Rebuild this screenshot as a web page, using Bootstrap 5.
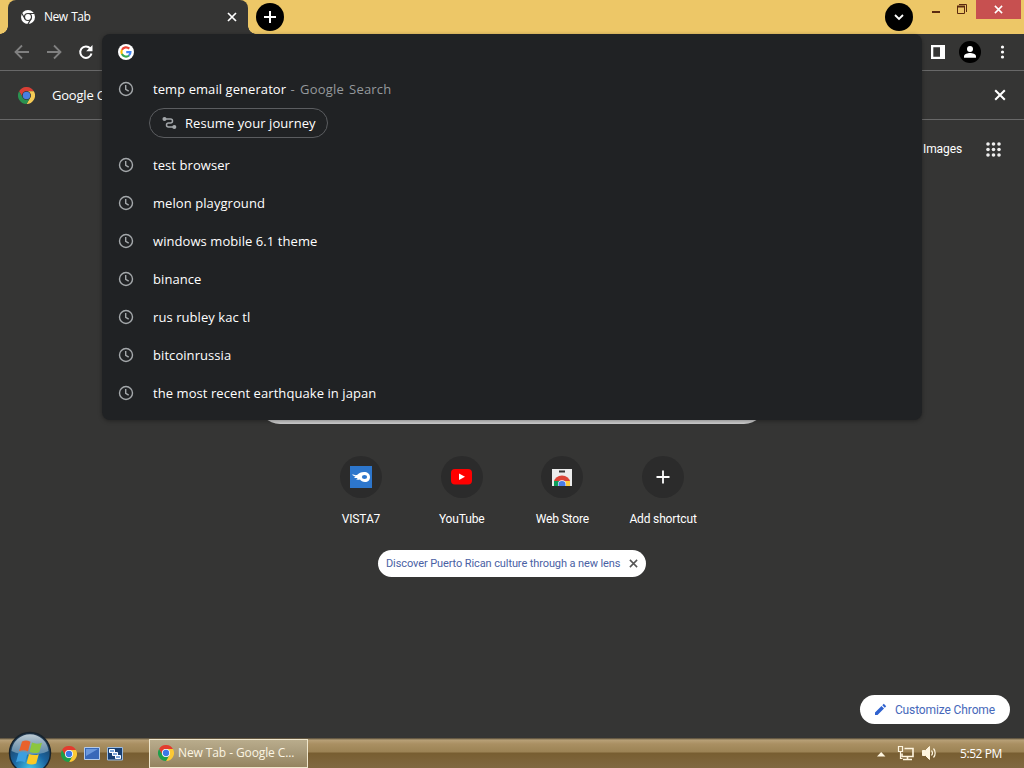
<!DOCTYPE html>
<html lang="en">
<head>
    <meta charset="UTF-8">
    <meta name="viewport" content="width=device-width, initial-scale=1.0">
    <title>New Tab</title>
    <link href="https://cdn.jsdelivr.net/npm/bootstrap@5.3.0/dist/css/bootstrap.min.css" rel="stylesheet">
    <style>
        body { font-family: "Open Sans", "Noto Sans", sans-serif; font-size: 13px; background: #353534; color: #fff; height: 768px; }
        svg { display: block; flex-shrink: 0; }
        .roboto { font-family: Roboto, "Liberation Sans", sans-serif; }

        .title-bar { height: 34px; background: #edc767; }
        .tab-foot { width: 8px; height: 34px; background: radial-gradient(circle 8px at 0 0, #edc767 7.5px, #353534 8px) 0 26px / 8px 8px no-repeat; }
        .tab-foot.flip { transform: scaleX(-1); }
        .browser-tab { width: 240px; height: 34px; background: #353534; border-radius: 8px 8px 0 0; padding: 0 11px 0 13px; }
        .browser-tab span { font-size: 12px; margin-left: 9px; letter-spacing: -.5px; word-spacing: 1px; }
        .round-btn { width: 28px; height: 28px; background: #000; margin-top: 3px; }
        .win-controls { height: 19px; margin-left: 18px; }
        .win-close { width: 45px; height: 19px; background: #c75050; margin: 0 3px 0 9px; }

        .tool-bar { height: 37px; border-bottom: 1px solid #686868; padding: 0 12px 0 14px; }
        .tool-icons { gap: 14px; }
        .info-bar { height: 49px; border-bottom: 1px solid #686868; padding: 0 18px; }
        .info-bar span { letter-spacing: -.2px; margin-left: 17px; padding-top: 2px; }

        .suggest-box { left: 102px; top: 34px; width: 820px; height: 386px; background: #202224; border-radius: 8px; box-shadow: 0 1px 4px rgba(0, 0, 0, .35); z-index: 10; letter-spacing: .07px; }
        .suggest-head { height: 36px; padding-left: 16px; }
        .suggest-row { height: 38px; padding-left: 16px; gap: 19px; }
        .suggest-row span, .journey span { padding-top: 2px; }
        .suggest-row small { font-size: inherit; color: #95999c; letter-spacing: .2px; word-spacing: 1.5px; margin-left: 1px; }
        .journey { width: 179px; height: 30px; margin: 0 0 8px 47px; border: 1px solid #5b5d60; padding-left: 12px; gap: 8px; }

        .new-tab-page { height: 618px; }
        .top-links { height: 57px; padding-right: 23px; gap: 23px; font-size: 12px; letter-spacing: -.1px; }
        .search-box { width: 508px; height: 44px; background: #ccc; margin-top: 203px; }
        .shortcut { width: 100.7px; font-size: 12px; letter-spacing: -.15px; }
        .tile-circle { width: 42px; height: 42px; background: #2b2b2b; }
        .shortcut span { margin-top: 12px; line-height: 18px; }
        .promo { width: 268px; height: 27px; background: #fff; color: #4a61a4; font-size: 11px; letter-spacing: -.1px; margin-top: 22px; padding: 0 8px; }
        .promo span { padding-top: 1px; }
        .customize { width: 150px; height: 29px; background: #fff; color: #4668ba; font-size: 12px; margin: 0 14px 14px 0; padding: 0 15px 0 14px; letter-spacing: -.12px; }

        .task-bar { height: 30px; background: linear-gradient(#4a4232 0, #b7a077 2px, #a98f62 6px, #9c8355 14px, #785e31 15px, #806840 29px); padding-right: 22px; font-size: 12px; }
        .start-orb { left: 8px; bottom: -7px; z-index: 5; }
        .quick-launch { margin-left: 61px; gap: 7px; padding-top: 1px; }
        .task-item { width: 159px; height: 29px; margin-left: 26px; padding-left: 8px; gap: 4px; background: linear-gradient(#b9ac8c, #a99b7b 45%, #94835f); border: 1px solid #efe6cc; color: #fbf4e2; letter-spacing: -.1px; }
        .clock-text { letter-spacing: -.4px; padding-top: 1px; margin-left: 21px; }
    </style>
</head>
<body class="position-relative overflow-hidden d-flex flex-column">
    <!-- shared icons -->
    <svg width="0" height="0" class="position-absolute">
        <symbol id="chrome" viewBox="0 0 48 48">
            <path fill="#e33b2e" d="M3.2 12A24 24 0 0 1 44.8 12H24A12 12 0 0 0 13.6 30z"/>
            <path fill="#fcc934" d="M44.8 12A24 24 0 0 1 24 48L34.4 30A12 12 0 0 0 24 12z"/>
            <path fill="#1e9e4a" d="M24 48A24 24 0 0 1 3.2 12L13.6 30A12 12 0 0 0 34.4 30z"/>
            <circle cx="24" cy="24" r="12" fill="#fff"/>
            <circle cx="24" cy="24" r="9.5" fill="#3b78e7"/>
        </symbol>
        <symbol id="chrome-flat" viewBox="0 0 48 48">
            <path fill="#d93f35" d="M3.2 12A24 24 0 0 1 44.8 12H24A12 12 0 0 0 13.6 30z"/>
            <path fill="#f5cb55" d="M44.8 12A24 24 0 0 1 24 48L34.4 30A12 12 0 0 0 24 12z"/>
            <path fill="#2a9150" d="M24 48A24 24 0 0 1 3.2 12L13.6 30A12 12 0 0 0 34.4 30z"/>
            <circle cx="24" cy="24" r="12" fill="#353534"/>
            <circle cx="24" cy="24" r="10.5" fill="#4a7fe0"/>
        </symbol>
        <symbol id="clock" viewBox="0 0 16 16">
            <g fill="none" stroke="#a4a8ab" stroke-width="1.4"><circle cx="8" cy="8" r="6.5"/><path d="M7.7 4v4.3l3 1.9"/></g>
        </symbol>
        <symbol id="cross" viewBox="0 0 10 10">
            <path d="M1 1l8 8M9 1l-8 8" stroke="currentColor" stroke-width="1.7" fill="none"/>
        </symbol>
    </svg>

    <div class="title-bar d-flex">
        <div class="tab-foot"></div>
        <div class="browser-tab d-flex align-items-center">
            <svg width="14" height="14" viewBox="0 0 48 48">
                <circle cx="24" cy="24" r="24" fill="#fff"/>
                <g fill="none" stroke="#353534" stroke-width="4"><circle cx="24" cy="24" r="12"/><path d="M24 12h22M13.6 30L2.6 11M34.4 30L23.5 49"/></g>
            </svg>
            <span>New Tab</span>
            <svg class="ms-auto" width="10" height="10"><use href="#cross"/></svg>
        </div>
        <div class="tab-foot flip"></div>
        <div class="round-btn rounded-circle d-flex align-items-center justify-content-center">
            <svg width="12" height="12"><path d="M6 0v12M0 6h12" stroke="#fff" stroke-width="2"/></svg>
        </div>
        <div class="round-btn rounded-circle d-flex align-items-center justify-content-center ms-auto">
            <svg width="10" height="7" viewBox="0 0 10 7"><path d="M1 1l4 4 4-4" stroke="#fff" stroke-width="1.8" fill="none"/></svg>
        </div>
        <div class="win-controls d-flex align-items-center">
            <svg width="36" height="19"><path d="M1 12h8" stroke="#5b2a10" stroke-width="2"/><path d="M26.5 6.5h7v7h-7zM28 4.5h7.5V12" stroke="#5b2a10" fill="none"/><path d="M26 6.5h8" stroke="#5b2a10" stroke-width="2"/></svg>
            <div class="win-close d-flex align-items-center justify-content-center">
                <svg width="9" height="9"><use href="#cross"/></svg>
            </div>
        </div>
    </div>

    <div class="tool-bar d-flex align-items-center">
        <svg width="82" height="36" fill="none" stroke-width="1.8">
            <path stroke="#808080" d="M15 18H2M8 11.5L1.5 18L8 24.5M33 18h13M40 11.5L46.5 18L40 24.5"/>
            <path stroke="#fff" stroke-width="2" d="M76.3 14.5A5.7 5.7 0 1 0 77.5 19.5"/><path fill="#fff" d="M78.5 11v6.3h-6.3z"/>
        </svg>
        <div class="tool-icons d-flex align-items-center ms-auto">
            <svg width="14" height="14"><path fill="#fff" fill-rule="evenodd" d="M0 0h14v14H0zM2.3 2.3v9.4H9V2.3z"/></svg>
            <svg width="22" height="22" viewBox="0 0 22 22"><circle cx="11" cy="11" r="11"/><circle cx="11" cy="8" r="3" fill="#fff"/><path fill="#fff" d="M5 16.8v-1.5c0-2.4 3.8-3.3 6-3.3s6 .9 6 3.3v1.5z"/></svg>
            <svg width="17" height="22" fill="#fff"><circle cx="7.5" cy="6" r="1.6"/><circle cx="7.5" cy="11" r="1.6"/><circle cx="7.5" cy="16" r="1.6"/></svg>
        </div>
    </div>

    <div class="info-bar d-flex align-items-center">
        <svg width="17" height="17"><use href="#chrome-flat"/></svg>
        <span>Google Chrome</span>
        <svg class="ms-auto" width="12" height="12"><use href="#cross"/></svg>
    </div>

    <div class="suggest-box position-absolute">
        <div class="suggest-head d-flex align-items-center">
            <svg width="16" height="16" viewBox="0 0 34 34" fill="none" stroke-width="4.5">
                <circle cx="17" cy="17" r="17" fill="#fff"/>
                <path stroke="#ea4335" d="M8.3 12.5A10 10 0 0 1 24 9.8"/><path stroke="#fbbc05" d="M8.3 21.5A10 10 0 0 1 8.3 12.5"/>
                <path stroke="#34a853" d="M23.5 24.5A10 10 0 0 1 8.3 21.5"/><path stroke="#4285f4" d="M17.5 17.2H26.5A10 10 0 0 1 23.3 24.6"/>
            </svg>
        </div>
        <div class="suggest-row d-flex align-items-center"><svg width="16" height="16"><use href="#clock"/></svg><span>temp email generator <small>- Google Search</small></span></div>
        <div class="journey rounded-pill d-flex align-items-center">
            <svg width="15" height="14" viewBox="0 0 15 14" fill="none" stroke="#a4a8ab" stroke-width="1.5"><path d="M3 3h5.5a2 2 0 0 1 0 4H6.5a2 2 0 0 0 0 4H12"/><circle cx="2.5" cy="3" r="1.3" fill="#a4a8ab"/><circle cx="12.3" cy="11" r="1.3" fill="#a4a8ab"/></svg>
            <span>Resume your journey</span>
        </div>
        <div class="suggest-row d-flex align-items-center"><svg width="16" height="16"><use href="#clock"/></svg><span>test browser</span></div>
        <div class="suggest-row d-flex align-items-center"><svg width="16" height="16"><use href="#clock"/></svg><span>melon playground</span></div>
        <div class="suggest-row d-flex align-items-center"><svg width="16" height="16"><use href="#clock"/></svg><span>windows mobile 6.1 theme</span></div>
        <div class="suggest-row d-flex align-items-center"><svg width="16" height="16"><use href="#clock"/></svg><span>binance</span></div>
        <div class="suggest-row d-flex align-items-center"><svg width="16" height="16"><use href="#clock"/></svg><span>rus rubley kac tl</span></div>
        <div class="suggest-row d-flex align-items-center"><svg width="16" height="16"><use href="#clock"/></svg><span>bitcoinrussia</span></div>
        <div class="suggest-row d-flex align-items-center"><svg width="16" height="16"><use href="#clock"/></svg><span>the most recent earthquake in japan</span></div>
    </div>

    <div class="new-tab-page roboto d-flex flex-column align-items-center">
        <div class="top-links align-self-end d-flex align-items-center">
            <span>Images</span>
            <svg width="16" height="16" fill="#eee"><circle cx="3" cy="3" r="1.8"/><circle cx="8.5" cy="3" r="1.8"/><circle cx="14" cy="3" r="1.8"/><circle cx="3" cy="8.5" r="1.8"/><circle cx="8.5" cy="8.5" r="1.8"/><circle cx="14" cy="8.5" r="1.8"/><circle cx="3" cy="14" r="1.8"/><circle cx="8.5" cy="14" r="1.8"/><circle cx="14" cy="14" r="1.8"/></svg>
        </div>
        <div class="search-box rounded-pill"></div>
        <div class="d-flex mt-4 pt-2">
            <div class="shortcut d-flex flex-column align-items-center">
                <div class="tile-circle rounded-circle d-flex align-items-center justify-content-center">
                    <svg width="22" height="22"><path fill="#2d76cc" d="M0 0h22v22H0z"/><path fill="#fff" d="M2 8.5c2 0 3 1 5 .5C9 7 11 6 14 6c3.5 0 6 2 6 5s-2 5-5 5c-2.500 0-4-1-5-2.500-2 .5-3 .3-4-.2 1-.3 1.500-.8 1.500-1.300H4l1.500-1.500C4 10.300 3 9.500 2 8.500z"/><ellipse cx="14.500" cy="11" rx="2.600" ry="2" fill="#2d76cc"/></svg>
                </div>
                <span>VISTA7</span>
            </div>
            <div class="shortcut d-flex flex-column align-items-center">
                <div class="tile-circle rounded-circle d-flex align-items-center justify-content-center">
                    <svg width="21" height="16"><rect width="21" height="15.5" rx="4" fill="#f00"/><path fill="#fff" d="M8 4.5l6 3.3-6 3.3z"/></svg>
                </div>
                <span>YouTube</span>
            </div>
            <div class="shortcut d-flex flex-column align-items-center">
                <div class="tile-circle rounded-circle d-flex align-items-center justify-content-center">
                    <svg width="20" height="17"><path fill="#ececec" d="M0 0h20v17H0z"/><path fill="#333" d="M7 1.5h6v2H7z"/><path fill="#db4437" d="M2 13a8 6.500 0 0 1 16 0z"/><path fill="#0f9d58" d="M2 12h5v5H2z"/><path fill="#ffcd40" d="M13 12h5v5h-5z"/><path fill="#fff" d="M6 17v-2a4 3.800 0 0 1 8 0v2z"/><path fill="#4a7de8" d="M6.500 17v-2a3.500 3 0 0 1 7 0v2z"/></svg>
                </div>
                <span>Web Store</span>
            </div>
            <div class="shortcut d-flex flex-column align-items-center">
                <div class="tile-circle rounded-circle d-flex align-items-center justify-content-center">
                    <svg width="14" height="14"><path d="M7 .5v13M.5 7h13" stroke="#fff" stroke-width="1.8"/></svg>
                </div>
                <span>Add shortcut</span>
            </div>
        </div>
        <div class="promo rounded-pill d-flex align-items-center justify-content-between">
            <span class="text-nowrap">Discover Puerto Rican culture through a new lens</span>
            <svg width="9" height="9" color="#555"><use href="#cross"/></svg>
        </div>
        <div class="customize rounded-pill d-flex align-items-center justify-content-between align-self-end mt-auto">
            <svg width="13" height="13" fill="#2f62cf"><path d="M1 9.5l6.500-6.500 2.500 2.500L3.500 12H1zM8.300 2.200L9.800.8l2.400 2.400-1.400 1.500z"/></svg>
            <span class="text-nowrap">Customize Chrome</span>
        </div>
    </div>

    <div class="task-bar position-relative d-flex align-items-center">
        <svg class="start-orb position-absolute" width="44" height="44" viewBox="0 0 44 44">
            <defs>
                <radialGradient id="orb" cx=".5" cy=".9" r=".85"><stop offset="0" stop-color="#42c6ea"/><stop offset=".5" stop-color="#1a64a0"/><stop offset="1" stop-color="#20384f"/></radialGradient>
                <linearGradient id="gloss" x2="0" y2="1"><stop offset="0" stop-color="#cfdce4" stop-opacity=".9"/><stop offset="1" stop-color="#8fb0c4" stop-opacity=".55"/></linearGradient>
            </defs>
            <circle cx="22" cy="22" r="20.5" fill="url(#orb)" stroke="#17222b" stroke-width="1.5"/>
            <path fill="url(#gloss)" d="M3.5 20a18.600 18.600 0 0 1 37 0c-11 5-26 5-37 0z"/>
            <path fill="#e8622c" d="M14 10.5c3-1.500 5.500-1.300 8.500.3l-2.500 9.700c-3-1.500-6-1.600-9-.3z"/>
            <path fill="#8cc63f" d="M24 11.5c3 1.500 6.500 1.500 10 .2l-2.700 9.500c-3 1.300-6.500 1.200-9.800-.2z"/>
            <path fill="#3c9fe0" d="M10.5 22c3-1.300 6-1.200 9 .3L17 31.500c-3-1.500-5.700-1.500-9-.2z"/>
            <path fill="#fbc926" d="M21 23c3 1.400 6.500 1.500 9.800.2l-2.600 9.300c-3.200 1.300-6.500 1.200-9.700-.3z"/>
        </svg>
        <div class="quick-launch d-flex align-items-center">
            <svg width="16" height="16"><use href="#chrome"/></svg>
            <svg width="16" height="14"><path fill="#3868b8" stroke="#b4cbea" d="M.5.5h15v12H.5z"/><path fill="#6b98dc" d="M2 2h12L2 9z"/></svg>
            <svg width="16" height="14"><path fill="#173f73" stroke="#9dbbdc" d="M.5.5h15v12.500H.5z"/><g fill="#7fa9dc" stroke="#fff"><path d="M2.500 2.500h5v3h-5zM5.500 5.500h5v3h-5zM8.500 8.500h5v3h-5z"/></g></svg>
        </div>
        <div class="task-item d-flex align-items-center">
            <svg width="16" height="16"><use href="#chrome"/></svg>
            <span class="text-nowrap">New Tab - Google C...</span>
        </div>
        <div class="d-flex align-items-center ms-auto">
            <svg width="62" height="18" fill="none" stroke="#fff6e0">
                <path fill="#fff6e0" stroke="none" d="M0 12.5l4.200-4.500 4.200 4.500z"/>
                <path d="M27.5 4.500h8.500v8h-11v-3M30.500 13v2.500M26 15.500h9" stroke-width="1.6"/><path d="M21.500 2.500h4v5h-4zM23.500 7.500v7h2" stroke-width="1.2"/>
                <path fill="#fff6e0" d="M45.500 6.500h3l4-4v13l-4-4h-3z"/><path d="M54.500 6.500c1.200 1.500 1.200 3.500 0 5M56.500 4.500c2.200 2.500 2.200 6.500 0 9" stroke-width="1.2"/>
            </svg>
            <span class="clock-text">5:52 PM</span>
        </div>
    </div>

    <script src="https://cdn.jsdelivr.net/npm/bootstrap@5.3.0/dist/js/bootstrap.bundle.min.js"></script>
</body>
</html>
